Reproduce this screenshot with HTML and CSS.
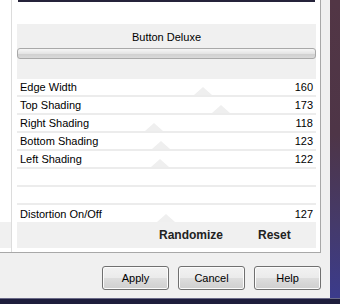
FILE: index.html
```html
<!DOCTYPE html>
<html>
<head>
<meta charset="utf-8">
<link rel="stylesheet" href="styles.css">
</head>
<body>
<div class="screen">
  <div class="main">
    <div class="dialog">
      <div class="content">
        <div class="lstrip"><div class="lgray"></div></div>
        <div class="panel">
          <div class="preview-edge"></div>
          <div class="gap"></div>
          <div class="header">
            <div class="title">Button Deluxe</div>
            <div class="slider"></div>
          </div>
          <div class="rows">
            <div class="row"><span>Edge Width</span><span>160</span><i class="tri" style="left:177px"></i></div>
            <div class="row"><span>Top Shading</span><span>173</span><i class="tri" style="left:195px"></i></div>
            <div class="row"><span>Right Shading</span><span>118</span><i class="tri" style="left:128px"></i></div>
            <div class="row"><span>Bottom Shading</span><span>123</span><i class="tri" style="left:135px"></i></div>
            <div class="row"><span>Left Shading</span><span>122</span><i class="tri" style="left:134px"></i></div>
            <div class="row"><span></span><span></span></div>
            <div class="row"><span></span><span></span></div>
            <div class="row last"><span>Distortion On/Off</span><span>127</span><i class="tri" style="left:140px"></i></div>
          </div>
          <div class="actions">
            <span class="rand">Randomize</span>
            <span class="reset">Reset</span>
          </div>
        </div>
        <div class="rgap"></div>
      </div>
      <div class="footer">
        <button class="btn">Apply</button>
        <button class="btn">Cancel</button>
        <button class="btn">Help</button>
      </div>
    </div>
    <div class="desk"></div>
  </div>
  <div class="taskbar"></div>
</div>
</body>
</html>
```
FILE: styles.css
```css
* { box-sizing: border-box; }
html, body { margin: 0; padding: 0; }
body { width: 340px; height: 304px; overflow: hidden; font-family: "Liberation Sans", Arial, sans-serif; font-size: 11px; color: #000; }
.screen { width: 340px; height: 304px; display: flex; flex-direction: column; }
.main { height: 298px; display: flex; }
.dialog { width: 330px; background: #f0f0f0; display: flex; flex-direction: column; }
.content { width: 321px; height: 253px; background: #fff; display: flex; border-right: 1px solid #a8a8a8; border-bottom: 1px solid #a8a8a8; }
.lstrip { width: 12px; border-right: 1px solid #dcdcdc; padding-top: 222px; margin-right: 5px; }
.lgray { height: 26px; background: #f0f0f0; }
.panel { width: 299px; display: flex; flex-direction: column; }
.preview-edge { height: 2px; margin: 0 1px; background: #25233a; }
.gap { height: 22px; }
.header { height: 55px; background: #f0f0f0; display: flex; flex-direction: column; align-items: center; padding-top: 7px; }
.title { height: 13px; line-height: 13px; }
.slider { margin-top: 4px; width: 299px; height: 11px; border: 1px solid #a9a9a9; border-radius: 3px; background: linear-gradient(#f6f6f6, #e4e4e4 50%, #cfcfcf 51%, #d9d9d9); }
.rows { display: flex; flex-direction: column; }
.row { position: relative; height: 18px; border-bottom: 2px solid #ececec; display: flex; justify-content: space-between; align-items: center; padding: 0 3px 0 3px; }
.row.last { height: 17px; border-bottom: none; }
.row span { position: relative; z-index: 1; line-height: 14px; }
.tri { position: absolute; bottom: 0; width: 0; height: 0; border-left: 9px solid transparent; border-right: 9px solid transparent; border-bottom: 8px solid #efefef; }
.actions { height: 26px; background: #f0f0f0; display: flex; align-items: center; font-weight: bold; font-size: 12px; color: #222; }
.rand { margin-left: 142px; }
.reset { margin-left: 35px; }
.rgap { width: 4px; }
.footer { height: 45px; display: flex; padding: 13px 0 0 102px; gap: 9px; }
.btn { width: 67px; height: 24px; border: 1px solid #707070; border-radius: 3px; background: linear-gradient(#f2f2f2, #ebebeb 48%, #dddddd 52%, #cfcfcf); font-family: "Liberation Sans", Arial, sans-serif; font-size: 11px; color: #000; padding: 0; box-shadow: inset 0 0 0 1px #fcfcfc; }
.desk { width: 10px; background: linear-gradient(#523645, #4e3547 45%, #453a6a 75%, #3b3b8c); }
.taskbar { height: 6px; background: #1e1d3c; border-top: 1px solid #6a6a88; }
```
